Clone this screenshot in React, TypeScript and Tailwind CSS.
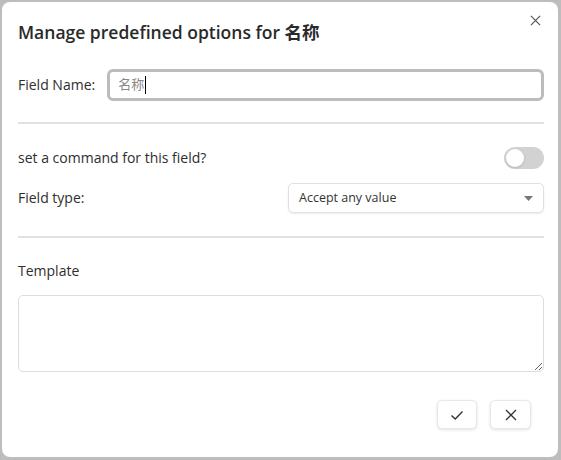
import { useState } from "react";

const font = { fontFamily: '"Open Sans", "Noto Sans CJK SC", sans-serif' };

function CheckIcon() {
  return (
    <svg width="14" height="14" viewBox="0 0 14 14" fill="none">
      <path d="M1.5 7.5 L5.2 11 L12.5 3.5" stroke="#333" strokeWidth="1.4" />
    </svg>
  );
}

function CrossIcon({ size = 12, color = "#333" }: { size?: number; color?: string }) {
  return (
    <svg width={size} height={size} viewBox="0 0 12 12" fill="none">
      <path d="M1 1 L11 11 M11 1 L1 11" stroke={color} strokeWidth="1.3" />
    </svg>
  );
}

export default function App() {
  const [enabled, setEnabled] = useState(false);

  return (
    <div className="h-[460px] w-[561px] bg-[#bdbdbd] p-[2px] pb-[3px] pr-[3px]" style={font}>
      <div className="relative flex h-full flex-col rounded-lg bg-white pl-[16px] pr-[14px] pt-[18px] text-[#2e2e2e]">
        <button className="absolute right-[13px] top-[9px] p-1">
          <CrossIcon size={11} color="#555" />
        </button>

        <h2 className="text-[17.5px] font-semibold leading-6 text-[#2a2a2a]">
          Manage predefined options for 名称
        </h2>

        <div className="mt-[25px] flex items-center gap-3">
          <label className="shrink-0 text-sm">Field Name:</label>
          <div className="flex h-[32px] flex-1 items-center rounded-md border-[3px] border-[#bcbcbc] px-2 text-[13px] text-[#888]">
            名称<span className="ml-px h-[18px] w-px bg-black" />
          </div>
        </div>

        <hr className="mt-[21px] border-t-2 border-[#e2e2e2]" />

        <div className="mt-[23px] flex items-center justify-between">
          <span className="text-sm">set a command for this field?</span>
          <button
            onClick={() => setEnabled(!enabled)}
            className="flex h-[22px] w-[40px] items-center rounded-full bg-[#d2d2d2] px-[2px]"
          >
            <span className="h-[18px] w-[18px] rounded-full bg-white shadow-sm" />
          </button>
        </div>

        <div className="mt-[14px] flex items-center justify-between">
          <span className="text-sm">Field type:</span>
          <div className="flex h-[30px] w-[256px] items-center justify-between rounded-[5px] border border-[#e0e0e0] pl-[10px] pr-[10px] text-[12.5px] text-[#333] shadow-[0_1px_2px_rgba(0,0,0,0.08)]">
            Accept any value
            <svg width="9" height="5" viewBox="0 0 9 5">
              <path d="M0 0 H9 L4.5 5 Z" fill="#777" />
            </svg>
          </div>
        </div>

        <hr className="mt-[23px] border-t-2 border-[#e2e2e2]" />

        <div className="mt-[23px] text-sm">Template</div>

        <textarea className="mt-[14px] h-[77px] w-full resize-y rounded-[5px] border border-[#dddddd] outline-none" />

        <div className="mt-[28px] flex justify-end gap-[13px] pr-[13px]">
          <button className="flex h-[29px] w-[40px] items-center justify-center rounded-[5px] border border-[#e8e8e8] bg-white shadow-[0_1px_3px_rgba(0,0,0,0.12)]">
            <CheckIcon />
          </button>
          <button className="flex h-[29px] w-[41px] items-center justify-center rounded-[5px] border border-[#e8e8e8] bg-white shadow-[0_1px_3px_rgba(0,0,0,0.12)]">
            <CrossIcon size={12} />
          </button>
        </div>
      </div>
    </div>
  );
}
